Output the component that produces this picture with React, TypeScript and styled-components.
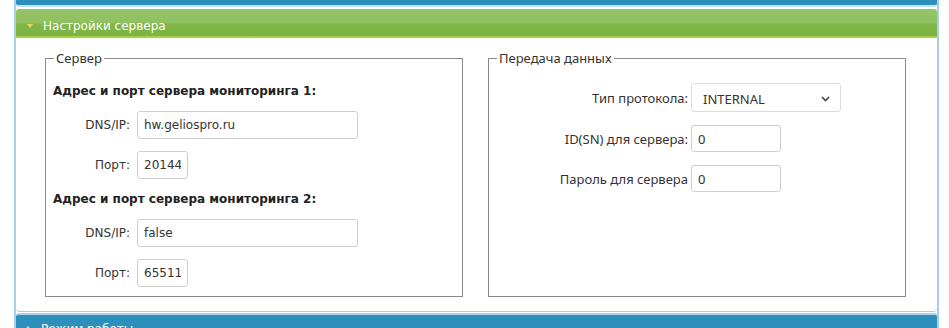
import styled, { createGlobalStyle } from "styled-components";

const GlobalStyle = createGlobalStyle`
  html, body {
    margin: 0;
    padding: 0;
    overflow: hidden;
    background: #fdfefe;
  }
  body {
    font-family: "DejaVu Sans", Verdana, sans-serif;
    font-size: 12px;
    color: #333;
  }
`;

const Frame = styled.div`
  margin-left: 14px;
  width: 921px;
  border-left: 2px solid #a6cee8;
  border-right: 2px solid #a6cee8;
`;

const PrevBar = styled.div`
  height: 5px;
  background: #2e8fbd;
  border-bottom: 2px solid #c4e3f5;
  border-radius: 0 0 3px 3px;
  margin-bottom: 2px;
`;

const Header = styled.div<{ $tone: "green" | "blue" }>`
  display: flex;
  align-items: center;
  gap: 10px;
  height: 29px;
  padding: ${(p) => (p.$tone === "green" ? "6px" : "0")} 0 0 11px;
  box-sizing: border-box;
  color: #fff;
  font-size: 12px;
  border-radius: 3px 3px 0 0;
  background: ${(p) =>
    p.$tone === "green"
      ? "linear-gradient(180deg, #96c468 0%, #90c05f 50%, #82b749 57%, #7cb342 100%)"
      : "#2e8fbd"};
  border-bottom: ${(p) => (p.$tone === "green" ? "2px solid #a5d53d" : "none")};
  border-top: ${(p) => (p.$tone === "blue" ? "2px solid #a9d3ec" : "none")};
  margin-top: ${(p) => (p.$tone === "blue" ? "1px" : "0")};
`;

const Arrow = styled.span<{ $open?: boolean }>`
  width: 0;
  height: 0;
  ${(p) =>
    p.$open
      ? `border-left: 3px solid transparent;
         border-right: 3px solid transparent;
         border-top: 4px solid #f3d160;`
      : `border-top: 3px solid transparent;
         border-bottom: 3px solid transparent;
         border-left: 4px solid #fff;`}
`;

const Content = styled.div`
  background: #fff;
  border-bottom: 1px solid #a6cee8;
  border-radius: 0 0 4px 4px;
  padding: 12px 30px 14px 29px;
  display: grid;
  grid-template-columns: 418px 418px;
  column-gap: 25px;
`;

const Fieldset = styled.fieldset`
  margin: 0;
  padding: 0 7px 9px 7px;
  border: 1px solid #8a8a8a;
  min-width: 0;
`;

const Legend = styled.legend`
  padding: 0 2px;
  margin-left: 1px;
  font-family: "Noto Sans", "Open Sans", sans-serif;
  font-size: 13px;
  line-height: 16px;
  color: #333;
`;

const Stack = styled.div<{ $gap: number }>`
  display: flex;
  flex-direction: column;
  gap: ${(p) => p.$gap}px;
  padding-top: 17px;
`;

const Heading = styled.div`
  font-weight: bold;
  line-height: 16px;
  color: #222;
`;

const Row = styled.div<{ $label: number; $gap: number }>`
  display: grid;
  grid-template-columns: ${(p) => p.$label}px auto;
  column-gap: ${(p) => p.$gap}px;
  align-items: center;
  justify-content: start;
`;

const Label = styled.label<{ $alt?: boolean }>`
  text-align: right;
  white-space: nowrap;
  color: #333;
  ${(p) =>
    p.$alt &&
    `font-family: "Noto Sans", "Open Sans", sans-serif; font-size: 13px;`}
`;

const Field = styled.input<{ $w: number; $h: number; $alt?: boolean }>`
  box-sizing: border-box;
  width: ${(p) => p.$w}px;
  height: ${(p) => p.$h}px;
  padding: 0 6px;
  border: 1px solid #cfcfcf;
  border-radius: 3px;
  background: #fff;
  color: #333;
  outline: none;
  font-family: ${(p) =>
    p.$alt ? `"Noto Sans", "Open Sans", sans-serif` : `"DejaVu Sans", Verdana, sans-serif`};
  font-size: ${(p) => (p.$alt ? 13 : 12)}px;
`;

const SelectBox = styled.div`
  box-sizing: border-box;
  width: 150px;
  height: 29px;
  display: flex;
  align-items: center;
  justify-content: space-between;
  padding: 2px 10px 0 11px;
  border: 1px solid #dcdcdc;
  border-radius: 3px;
  background: #fff;
  font-family: "Noto Sans", "Open Sans", sans-serif;
  font-size: 13px;
  color: #333;
`;

const Chevron = () => (
  <svg width="9" height="6" viewBox="0 0 9 6">
    <polyline points="1,1 4.5,4.5 8,1" fill="none" stroke="#444" strokeWidth="1.6" />
  </svg>
);

export default function App() {
  return (
    <>
      <GlobalStyle />
      <Frame>
        <PrevBar />
        <Header $tone="green">
          <Arrow $open />
          Настройки сервера
        </Header>
        <Content>
          <Fieldset>
            <Legend>Сервер</Legend>
            <Stack $gap={12}>
              <Heading>Адрес и порт сервера мониторинга 1:</Heading>
              <Row $label={77} $gap={7}>
                <Label>DNS/IP:</Label>
                <Field $w={221} $h={28} value="hw.geliospro.ru" readOnly />
              </Row>
              <Row $label={77} $gap={7}>
                <Label>Порт:</Label>
                <Field $w={51} $h={28} value="20144" readOnly />
              </Row>
              <Heading>Адрес и порт сервера мониторинга 2:</Heading>
              <Row $label={77} $gap={7}>
                <Label>DNS/IP:</Label>
                <Field $w={221} $h={28} value="false" readOnly />
              </Row>
              <Row $label={77} $gap={7}>
                <Label>Порт:</Label>
                <Field $w={51} $h={28} value="65511" readOnly />
              </Row>
            </Stack>
          </Fieldset>
          <Fieldset>
            <Legend>Передача данных</Legend>
            <Stack $gap={13}>
              <Row $label={192} $gap={3}>
                <Label $alt>Тип протокола:</Label>
                <SelectBox>
                  INTERNAL
                  <Chevron />
                </SelectBox>
              </Row>
              <Row $label={192} $gap={3}>
                <Label $alt>ID(SN) для сервера:</Label>
                <Field $alt $w={90} $h={27} value="0" readOnly />
              </Row>
              <Row $label={192} $gap={3}>
                <Label $alt>Пароль для сервера</Label>
                <Field $alt $w={90} $h={27} value="0" readOnly />
              </Row>
            </Stack>
          </Fieldset>
        </Content>
        <Header $tone="blue">
          <Arrow />
          Режим работы
        </Header>
      </Frame>
    </>
  );
}
